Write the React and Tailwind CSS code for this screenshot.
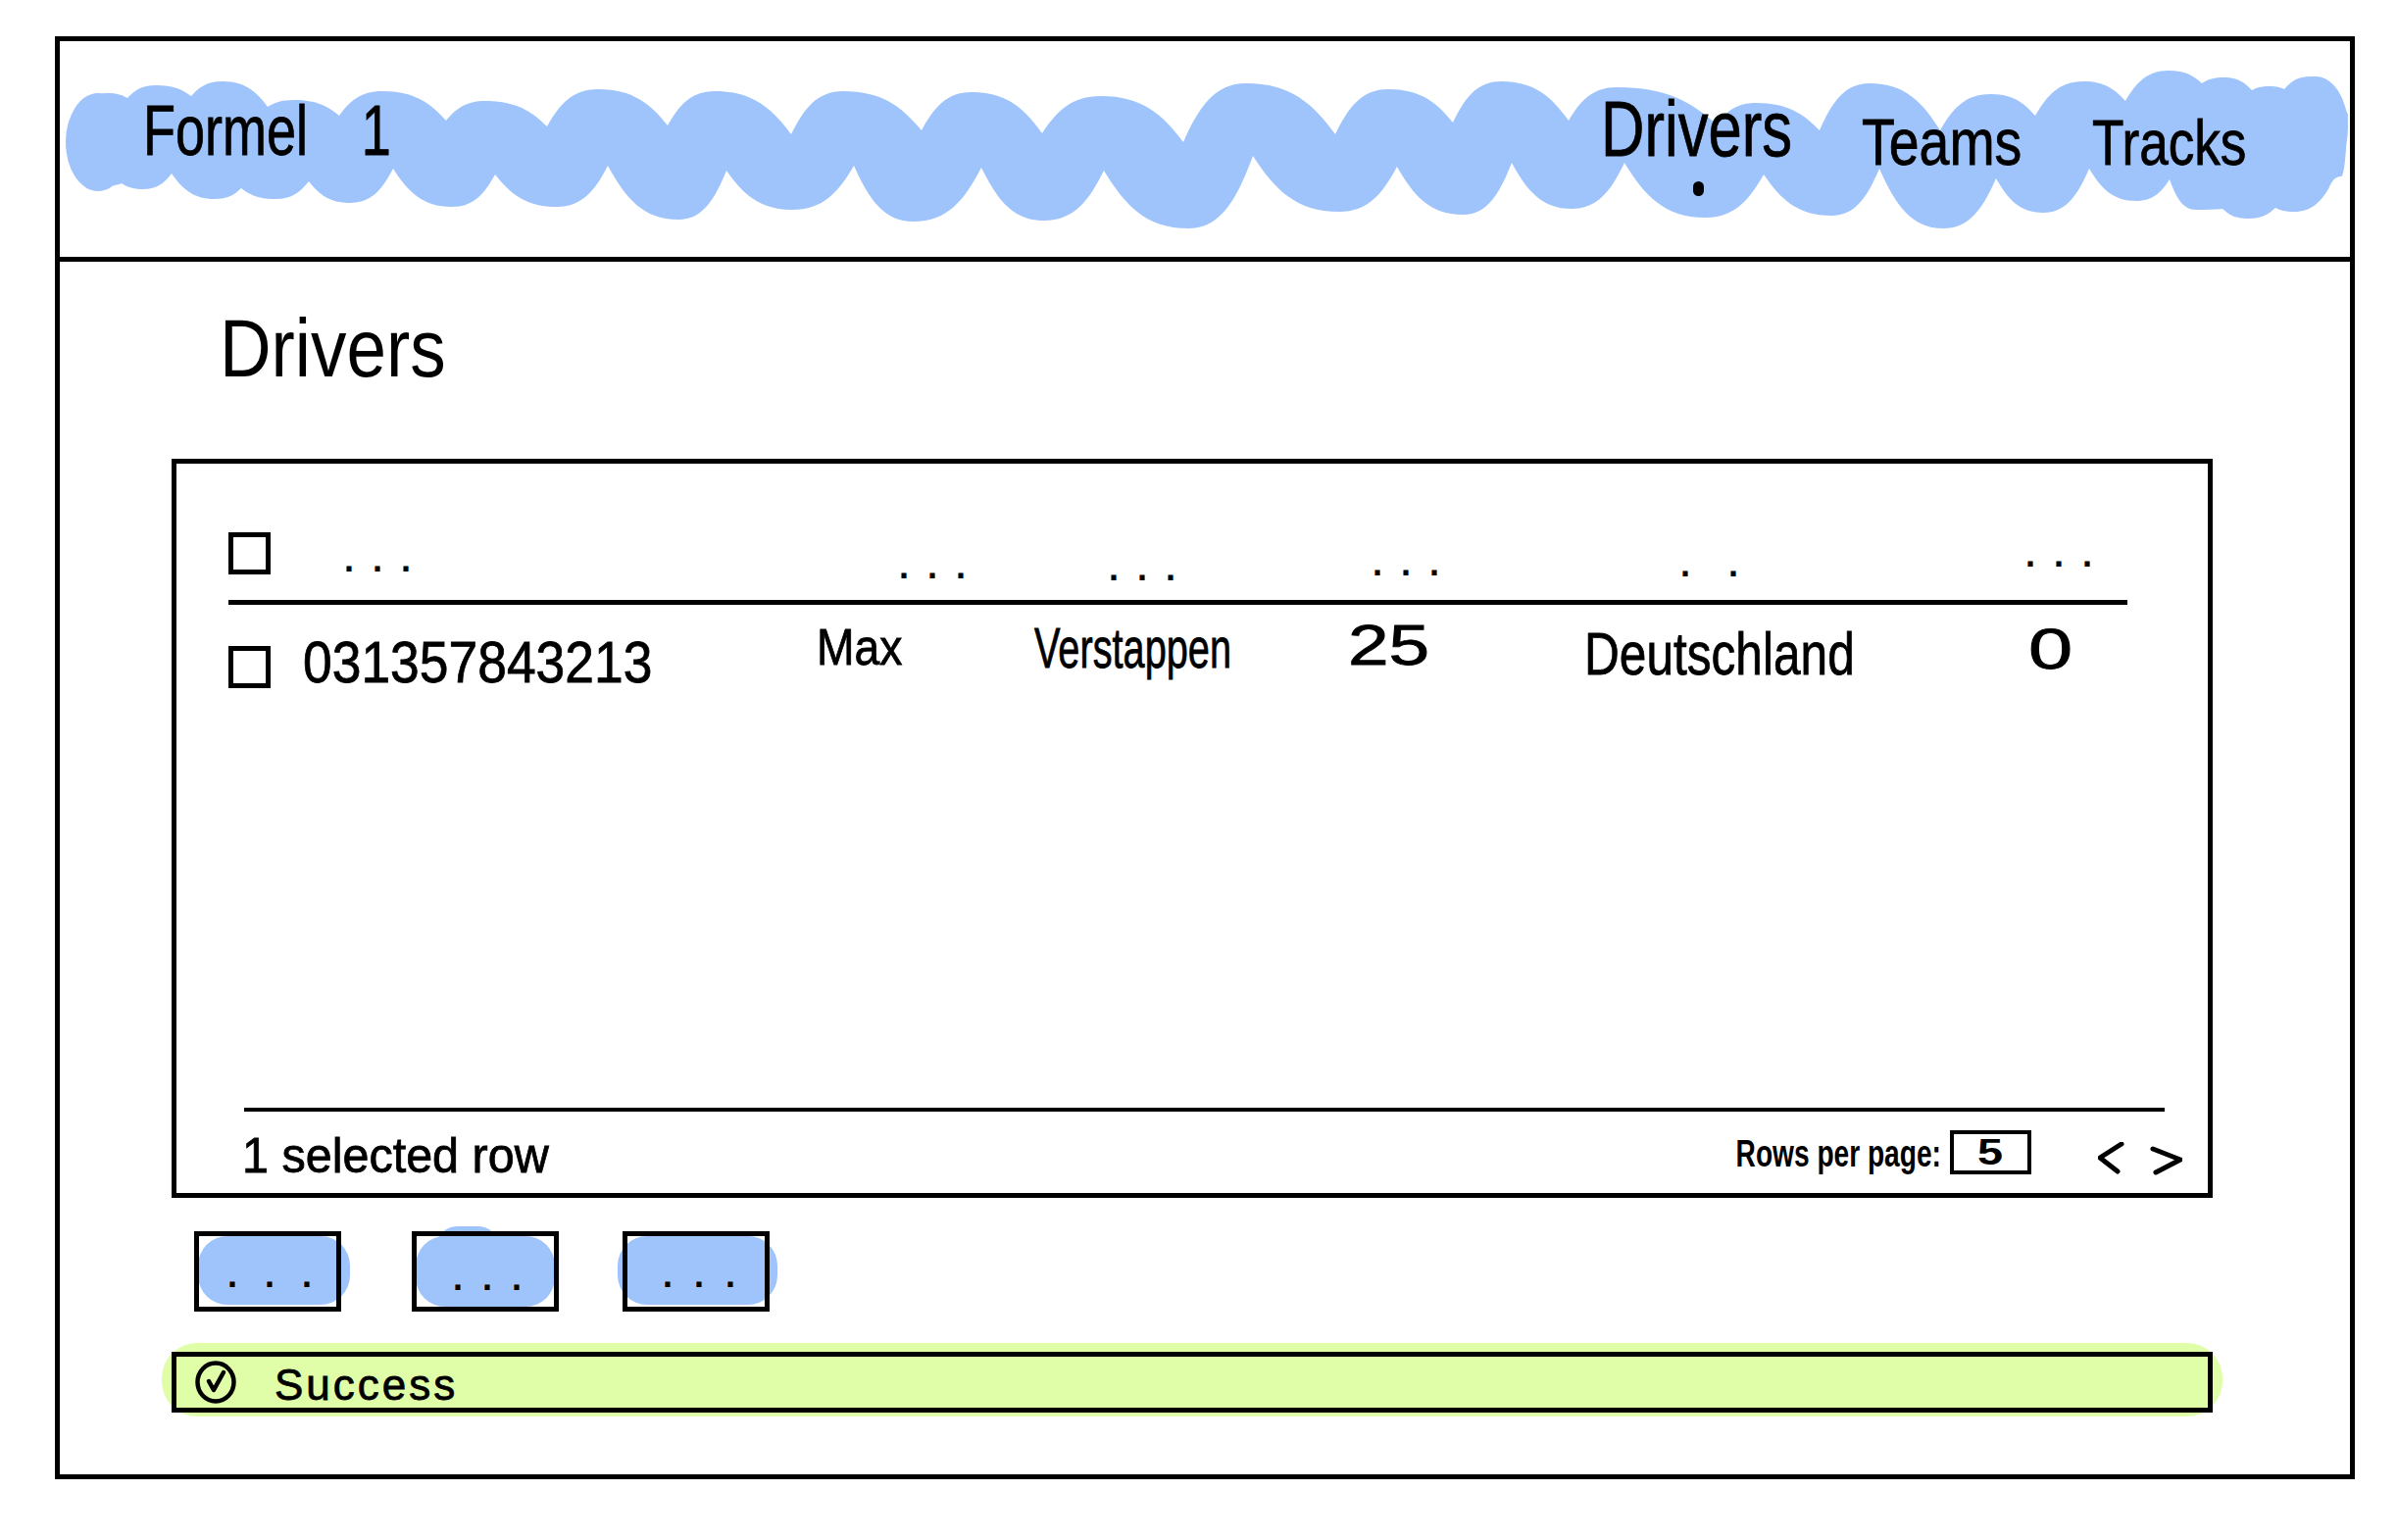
import React from "react";

const hand = "font-['Liberation_Sans',Arial,sans-serif] text-black";
const bold = "[-webkit-text-stroke:0.8px_black]";

// outline of the blue scribble behind the nav, [x, y] on the page, odd points are the round humps
const topEdge = [
  [67, 150], [109, 95], [130, 100], [159, 87], [195, 98], [227, 83], [273, 109], [300, 102], [346, 118],
  [390, 93], [455, 123], [495, 103], [558, 129], [610, 91], [681, 128], [729, 93], [807, 137], [860, 93],
  [940, 133], [991, 94], [1063, 136], [1123, 98], [1207, 145], [1271, 85], [1362, 137], [1416, 91],
  [1482, 125], [1531, 83], [1600, 123], [1649, 89], [1751, 127], [1791, 105], [1856, 133], [1907, 85],
  [1979, 133], [2030, 96], [2076, 118], [2125, 83], [2168, 103], [2212, 72], [2246, 85], [2268, 79],
  [2297, 92], [2315, 88], [2330, 91], [2357, 78], [2395, 117],
];
const bottomEdge = [
  [2395, 117], [2388, 180], [2375, 193], [2340, 216], [2321, 212], [2293, 223], [2267, 213], [2240, 214],
  [2213, 183], [2179, 205], [2131, 172], [2084, 217], [2036, 182], [1982, 233], [1917, 172], [1868, 220],
  [1799, 178], [1739, 222], [1657, 166], [1603, 213], [1542, 166], [1492, 219], [1425, 170], [1366, 216],
  [1278, 159], [1212, 233], [1126, 174], [1065, 225], [1001, 171], [932, 226], [871, 169], [808, 214],
  [741, 174], [692, 224], [620, 169], [568, 211], [505, 178], [461, 211], [401, 172], [357, 207], [315, 185],
  [281, 203], [246, 192], [219, 203], [175, 177], [146, 193], [124, 187], [105, 190], [85, 187], [67, 150],
];

function scallop(points) {
  let d = "";
  for (let i = 0; i + 2 < points.length; i += 2) {
    const [ax, ay] = points[i];
    const [cx, cy] = points[i + 1];
    const [bx, by] = points[i + 2];
    d += ` C${ax + (cx - ax) * 0.25} ${ay + (cy - ay) * 0.6} ${cx - (cx - ax) * 0.5} ${cy} ${cx} ${cy}`;
    d += ` C${cx + (bx - cx) * 0.5} ${cy} ${bx - (bx - cx) * 0.25} ${by + (cy - by) * 0.6} ${bx} ${by}`;
  }
  return d;
}

const scribblePath = `M67 150${scallop(topEdge)}${scallop(bottomEdge)} Z`;

function Checkbox() {
  return <div className="h-[43px] w-[43px] border-[5px] border-black" />;
}

function ActionButton({ children, halo, bump, dots }) {
  return (
    <div className="relative h-[82px] w-[150px]">
      <div className={`absolute bg-[#9fc4fb] ${halo}`}>
        {bump && <div className="absolute -top-[10px] left-[22px] h-[40px] w-[62px] rounded-full bg-[#9fc4fb]" />}
      </div>
      <div className={`relative flex h-full w-full items-center justify-center border-[5px] border-black ${hand} text-[36px] font-bold leading-none ${dots}`}>
        {children}
      </div>
    </div>
  );
}

export default function App() {
  return (
    <div className="min-h-[1571px] bg-white pl-[56px] pt-[37px]">
      <div className="h-[1472px] w-[2346px] border-[5px] border-black">
        <nav className="relative flex h-[225px] items-start justify-between border-b-[5px] border-black">
          <svg className="absolute -left-[1px] top-0 h-[220px] w-[2338px]" viewBox="60 42 2338 220" fill="#9fc4fb">
            <path d={scribblePath} />
            <ellipse cx="100" cy="145" rx="33" ry="50" />
            <ellipse cx="2362" cy="130" rx="33" ry="52" />
          </svg>
          <span className={`relative ml-[85px] mt-[55px] origin-left scale-x-[0.75] whitespace-nowrap text-[72px] leading-none ${hand} ${bold} [word-spacing:53px]`}>
            Formel 1
          </span>
          <div className="relative mr-[106px] mt-[50px] flex items-start">
            <div className="relative w-[266px]">
              <span className={`block origin-left scale-x-[0.77] whitespace-nowrap text-[80px] leading-none ${hand} ${bold}`}>Drivers</span>
              <span className="absolute left-[94px] top-[93px] h-[15px] w-[11px] rounded-full bg-black" />
            </div>
            <div className="w-[235px] pt-[20px]">
              <span className={`block origin-left scale-x-[0.84] whitespace-nowrap text-[66px] leading-none ${hand} ${bold}`}>Teams</span>
            </div>
            <div className="w-[157px] pt-[22px]">
              <span className={`block origin-left scale-x-[0.83] whitespace-nowrap text-[64px] leading-none ${hand} ${bold}`}>Tracks</span>
            </div>
          </div>
        </nav>

        <main className="pl-[114px]">
          <h1 className={`h-[201px] origin-[49px_0] scale-x-[0.867] pl-[49px] pt-[46px] text-[84px] font-normal leading-none ${hand}`}>Drivers</h1>

          <section className="flex h-[754px] w-[2082px] flex-col border-[5px] border-black">
            <div className="flex-1 pl-[53px] pt-[70px]">
              <div className="w-[1937px]">
                <div className={`grid h-[74px] grid-cols-[118px_566px_214px_269px_314px_352px_104px] border-b-[5px] border-black ${hand} text-[36px] font-bold leading-none tracking-[19px]`}>
                  <Checkbox />
                  <span className="pt-[10px]">...</span>
                  <span className="pt-[17px]">...</span>
                  <span className="pt-[19px]">...</span>
                  <span className="pt-[14px]">...</span>
                  <span className="pt-[15px] tracking-[39px]">..</span>
                  <span className="pt-[5px]">...</span>
                </div>
                <div className={`grid grid-cols-[76px_524px_222px_320px_241px_453px_101px] pt-[42px] ${hand} ${bold} text-[58px] leading-none`}>
                  <Checkbox />
                  <span className="-mt-[13px] origin-left scale-x-[0.89] whitespace-nowrap text-[60px]">031357843213</span>
                  <span className="-mt-[25px] origin-left scale-x-[0.89] whitespace-nowrap text-[52px]">Max</span>
                  <span className="-mt-[27px] origin-left scale-x-[0.685] whitespace-nowrap">Verstappen</span>
                  <span className="-mt-[30px] origin-left scale-x-[1.29] whitespace-nowrap">25</span>
                  <span className="-mt-[23px] origin-left scale-x-[0.8] whitespace-nowrap text-[62px]">Deutschland</span>
                  <span className="-mt-[26px] origin-left scale-x-[1.4] whitespace-nowrap">0</span>
                </div>
              </div>
            </div>

            <div className="ml-[69px] flex h-[87px] w-[1959px] items-start justify-between border-t-[4px] border-black">
              <span className={`-ml-[2px] mt-[20px] origin-left scale-x-[0.97] whitespace-nowrap text-[50px] leading-none ${hand} ${bold}`}>1 selected row</span>
              <div className="mr-[-18px] flex items-start">
                <span className={`mt-[24px] origin-right scale-x-[0.74] whitespace-nowrap text-[38px] font-bold leading-none ${hand}`}>Rows per page:</span>
                <div className={`ml-[9px] mt-[19px] flex h-[45px] w-[83px] items-center justify-center border-[4px] border-black ${hand} text-[36px] font-bold leading-none`}>
                  <span className="scale-x-[1.3]">5</span>
                </div>
                <svg className="ml-[68px] mt-[31px] h-[34px] w-[86px]" viewBox="0 0 86 34" fill="none" stroke="black" strokeWidth="5" strokeLinecap="round" strokeLinejoin="round">
                  <path d="M24 2 L2 16 L20 30" />
                  <path d="M56 7 L84 18 L59 31" />
                </svg>
              </div>
            </div>
          </section>

          <div className="ml-[23px] mt-[34px] flex">
            <ActionButton halo="left-[4px] top-[5px] h-[70px] w-[155px] rounded-[30px]" dots="pl-[32px] pt-[8px] tracking-[28px]">...</ActionButton>
            <div className="ml-[72px]">
              <ActionButton bump halo="left-[4px] top-[5px] h-[72px] w-[142px] rounded-[30px]" dots="pl-[24px] pt-[14px] tracking-[20px]">...</ActionButton>
            </div>
            <div className="ml-[65px]">
              <ActionButton halo="-left-[5px] top-[5px] h-[70px] w-[163px] rounded-[30px]" dots="pl-[28px] pt-[8px] tracking-[22px]">...</ActionButton>
            </div>
          </div>

          <div className="relative mt-[41px] h-[62px] w-[2082px]">
            <div className="absolute -left-[10px] -right-[10px] -top-[9px] -bottom-[4px] rounded-[36px] bg-[#e0fda8]" />
            <div className={`relative flex h-full items-center border-[5px] border-black ${hand}`}>
              <svg className="ml-[18px] h-[44px] w-[44px]" viewBox="0 0 44 44" fill="none" stroke="black" strokeWidth="4.5" strokeLinecap="round" strokeLinejoin="round">
                <ellipse cx="22" cy="22" rx="18.5" ry="19.5" />
                <path d="M15 21 L20 30 L30 12" />
              </svg>
              <span className={`ml-[38px] mt-[6px] text-[44px] leading-none tracking-[3px] ${bold}`}>Success</span>
            </div>
          </div>
        </main>
      </div>
    </div>
  );
}
